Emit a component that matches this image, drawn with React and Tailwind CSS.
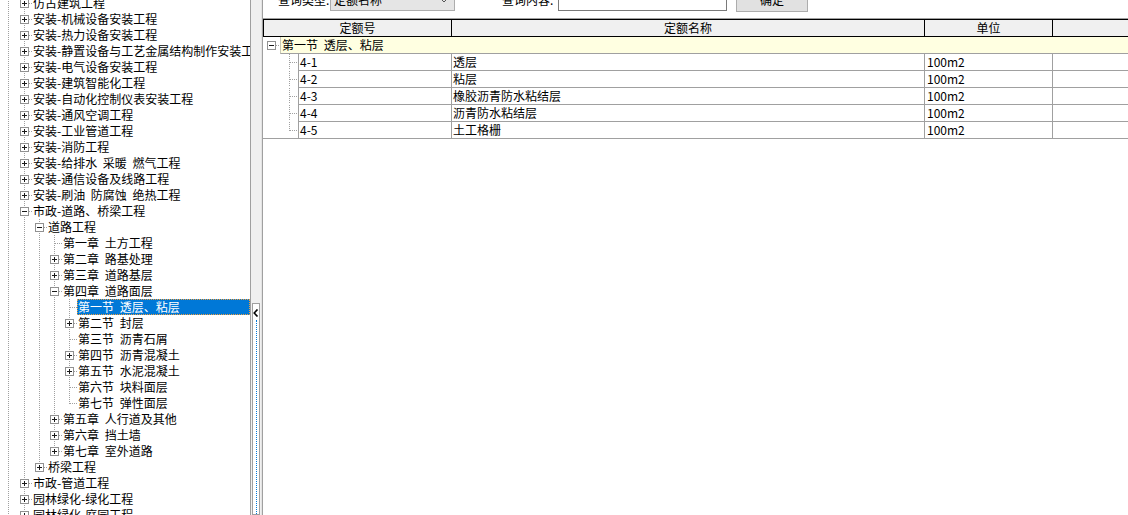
import React from "react";

const tree = [
  { t: "仿古建筑工程", closed: true },
  { t: "安装-机械设备安装工程", closed: true },
  { t: "安装-热力设备安装工程", closed: true },
  { t: "安装-静置设备与工艺金属结构制作安装工程", closed: true },
  { t: "安装-电气设备安装工程", closed: true },
  { t: "安装-建筑智能化工程", closed: true },
  { t: "安装-自动化控制仪表安装工程", closed: true },
  { t: "安装-通风空调工程", closed: true },
  { t: "安装-工业管道工程", closed: true },
  { t: "安装-消防工程", closed: true },
  { t: "安装-给排水 采暖 燃气工程", closed: true },
  { t: "安装-通信设备及线路工程", closed: true },
  { t: "安装-刷油 防腐蚀 绝热工程", closed: true },
  {
    t: "市政-道路、桥梁工程",
    open: [
      {
        t: "道路工程",
        open: [
          { t: "第一章 土方工程" },
          { t: "第二章 路基处理", closed: true },
          { t: "第三章 道路基层", closed: true },
          {
            t: "第四章 道路面层",
            open: [
              { t: "第一节 透层、粘层", sel: true },
              { t: "第二节 封层", closed: true },
              { t: "第三节 沥青石屑" },
              { t: "第四节 沥青混凝土", closed: true },
              { t: "第五节 水泥混凝土", closed: true },
              { t: "第六节 块料面层" },
              { t: "第七节 弹性面层" },
            ],
          },
          { t: "第五章 人行道及其他", closed: true },
          { t: "第六章 挡土墙", closed: true },
          { t: "第七章 室外道路", closed: true },
        ],
      },
      { t: "桥梁工程", closed: true },
    ],
  },
  { t: "市政-管道工程", closed: true },
  { t: "园林绿化-绿化工程", closed: true },
  { t: "园林绿化-庭园工程", closed: true },
  { t: "园林绿化-园林景观工程", closed: true },
];

const items = [
  { code: "4-1", name: "透层", unit: "100m2" },
  { code: "4-2", name: "粘层", unit: "100m2" },
  { code: "4-3", name: "橡胶沥青防水粘结层", unit: "100m2" },
  { code: "4-4", name: "沥青防水粘结层", unit: "100m2" },
  { code: "4-5", name: "土工格栅", unit: "100m2" },
];

function flatten(nodes, depth, trail, out) {
  nodes.forEach((n, i) => {
    const last = i === nodes.length - 1;
    out.push({ ...n, depth, trail, last });
    if (n.open) flatten(n.open, depth + 1, [...trail, !last], out);
  });
  return out;
}

const lineX = (d) => (d < 0 ? 8 : 24 + 15 * d);
const DOT = { stroke: "#a0a0a0", strokeDasharray: "1 1" };

function Expander({ cx, cy, closed }) {
  return (
    <g>
      <rect x={cx - 3.5} y={cy - 3.5} width={8} height={8} fill="#fff" stroke="#919191" />
      <line x1={cx - 2} y1={cy + 0.5} x2={cx + 3} y2={cy + 0.5} stroke="#1a1a1a" />
      {closed && <line x1={cx + 0.5} y1={cy - 2} x2={cx + 0.5} y2={cy + 3} stroke="#1a1a1a" />}
    </g>
  );
}

function TreeRow({ row }) {
  const { depth, trail, last, t, sel } = row;
  const cx = lineX(depth);
  const w = cx + 8;
  const expandable = row.closed || row.open;
  return (
    <div className="flex h-[16px]">
      <svg width={w} height={16} className="shrink-0" shapeRendering="crispEdges">
        {trail.map((has, i) =>
          has ? (
            <line key={i} x1={lineX(i - 1) + 0.5} y1={0} x2={lineX(i - 1) + 0.5} y2={16} {...DOT} />
          ) : null
        )}
        <line x1={cx + 0.5} y1={0} x2={cx + 0.5} y2={last ? 9 : 16} {...DOT} />
        <line x1={cx + 1} y1={8.5} x2={w} y2={8.5} {...DOT} />
        {expandable && <Expander cx={cx} cy={8} closed={row.closed} />}
      </svg>
      {sel ? (
        <div className="flex-1 min-w-0 whitespace-nowrap overflow-hidden bg-[#0078d7] text-white border border-dotted border-[#f0a040] leading-[14px] [word-spacing:3px]">
          {t}
        </div>
      ) : (
        <div className="flex-1 min-w-0 whitespace-nowrap overflow-hidden pl-[1px] leading-[16px] [word-spacing:3px]">
          {t}
        </div>
      )}
    </div>
  );
}

function Splitter() {
  return (
    <div className="w-[11px] shrink-0 bg-[#f0f0f0] flex flex-col border-r border-[#e3e3e3]">
      <div className="h-[303px] shrink-0" />
      <div className="ml-[1px] w-[8px] flex-1 border border-[#a0a0a0] bg-white flex flex-col items-center">
        <svg width="6" height="8" className="mt-[5px] shrink-0">
          <polyline points="4.5,0.5 1.2,4 4.5,7.5" fill="none" stroke="#000" strokeWidth="1.6" />
        </svg>
        <div className="mt-[3px] flex-1 border-l border-dotted border-[#0078d7]" />
      </div>
    </div>
  );
}

function Toolbar() {
  return (
    <div className="-mt-[12px] h-[30px] shrink-0">
      <div className="flex h-[24px] items-center">
        <div className="ml-[15px] w-[52px] whitespace-nowrap">查询类型:</div>
        <div className="w-[125px] h-[22px] border border-[#adadad] bg-[#e5e5e5] flex items-center pl-[3px] pr-[5px]">
          <span className="flex-1">定额名称</span>
          <svg width="10" height="6">
            <polyline points="0.5,0.5 5,5 9.5,0.5" fill="none" stroke="#555" />
          </svg>
        </div>
        <div className="ml-[47px] w-[56px] whitespace-nowrap">查询内容:</div>
        <div className="w-[169px] h-[22px] border border-[#7a7a7a] bg-white" />
        <div className="ml-[9px] w-[72px] h-[24px] border border-[#adadad] bg-[#e1e1e1] flex items-center justify-center">
          确定
        </div>
      </div>
    </div>
  );
}

function Grid() {
  return (
    <div className="flex-1 border-t border-[#a0a0a0]">
      <div className="flex h-[18px] border-y border-black bg-[#f0f0f0] leading-[16px]">
        <div className="w-[189px] border-x border-black text-center">定额号</div>
        <div className="w-[473px] border-r border-black text-center">定额名称</div>
        <div className="w-[128px] border-r border-black text-center">单位</div>
        <div className="flex-1" />
      </div>

      <div className="flex h-[17px]">
        <svg width="17" height="17" className="shrink-0" shapeRendering="crispEdges">
          <line x1={13} y1={8.5} x2={17} y2={8.5} {...DOT} />
          <Expander cx={8} cy={8} closed={false} />
        </svg>
        <div className="flex-1 bg-[#ffffe1] border-b border-[#a0a0a0] border-l border-l-[#c8c8b8] pl-[1px] leading-[16px] [word-spacing:3px] whitespace-nowrap">
          第一节 透层、粘层
        </div>
      </div>

      {items.map((it, i) => {
        const last = i === items.length - 1;
        return (
          <div key={it.code} className="flex h-[17px] leading-[16px]">
            <div className={"w-[35px] shrink-0 " + (last ? "border-b border-[#a0a0a0]" : "")}>
              <svg width="35" height="16" className="block" shapeRendering="crispEdges">
                <line x1={26.5} y1={0} x2={26.5} y2={last ? 9 : 16} {...DOT} />
                <line x1={27} y1={8.5} x2={35} y2={8.5} {...DOT} />
              </svg>
            </div>
            <div className="w-[154px] border-x border-b border-[#a0a0a0] pl-[1px]">{it.code}</div>
            <div className="w-[473px] border-r border-b border-[#a0a0a0] pl-[1px] whitespace-nowrap">{it.name}</div>
            <div className="w-[128px] border-r border-b border-[#a0a0a0] pl-[2px]">{it.unit}</div>
            <div className="flex-1 border-b border-[#a0a0a0]" />
          </div>
        );
      })}
    </div>
  );
}

export default function App() {
  const rows = flatten(tree, 0, [true], []);
  return (
    <div className="flex h-[515px] w-[1128px] overflow-hidden bg-white text-black text-[12px] font-['Noto_Sans_CJK_SC',sans-serif]">
      <div className="w-[251px] shrink-0 border-r border-[#a0a0a0] overflow-hidden">
        <div className="-mt-[5px]">
          {rows.map((r, i) => (
            <TreeRow key={i} row={r} />
          ))}
        </div>
      </div>
      <Splitter />
      <div className="flex-1 min-w-0 flex flex-col border-l border-[#a0a0a0]">
        <Toolbar />
        <Grid />
      </div>
    </div>
  );
}
